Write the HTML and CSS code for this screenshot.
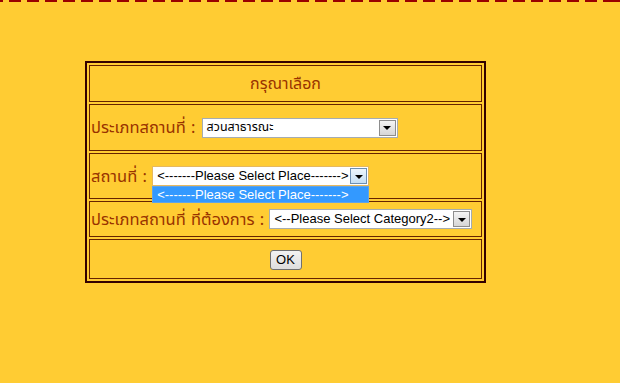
FILE: index.html
```html
<!DOCTYPE html>
<html>
<head>
<meta charset="utf-8">
<link rel="stylesheet" href="styles.css">
</head>
<body>
<div class="topline"></div>
<div class="wrap">
  <table class="box">
    <tr><td class="cell title r1">กรุณาเลือก</td></tr>
    <tr><td class="cell r2"><span class="lbl">ประเภทสถานที่ :</span> <span class="sel w1"><span class="val th">สวนสาธารณะ</span><span class="btn"><span class="tri"></span></span></span></td></tr>
    <tr><td class="cell r3"><span class="lbl">สถานที่ :</span> <span class="sel w2 focus"><span class="val">&lt;-------Please Select Place-------&gt;</span><span class="btn hot"><span class="tri"></span></span><span class="list">&lt;-------Please Select Place-------&gt;</span></span></td></tr>
    <tr><td class="cell r4"><span class="lbl">ประเภทสถานที่ ที่ต้องการ :</span> <span class="sel w3"><span class="val">&lt;--Please Select Category2--&gt;</span><span class="btn"><span class="tri"></span></span></span></td></tr>
    <tr><td class="cell center r5"><span class="ok">OK</span></td></tr>
  </table>
</div>
</body>
</html>
```

FILE: styles.css
```css
html, body {
  margin: 0;
  padding: 0;
  background: #ffcc33;
}
.topline {
  height: 2px;
  background: repeating-linear-gradient(90deg, #990000 0 12px, transparent 12px 18px);
  background-position: -9px 0;
}
.wrap {
  padding: 59px 0 0 85px;
}
.box {
  border: 2px solid #330000;
  border-spacing: 2px;
  width: 401px;
  box-sizing: border-box;
}
.cell {
  box-sizing: border-box;
  border: 1px solid #662200;
  padding: 0 0 0 1px;
  font-family: Tahoma, "Noto Sans Thai", Loma, Garuda, "DejaVu Sans", sans-serif;
  font-size: 16px;
  color: #993300;
  vertical-align: middle;
  white-space: nowrap;
}
.title, .center { text-align: center; padding: 0; }
.r1 { height: 37px; }
.r2 { height: 47px; }
.r3 { height: 46px; }
.r4 { height: 36px; }
.r5 { height: 40px; }
.lbl {
  vertical-align: middle;
  font-size: 16.5px;
  word-spacing: 1px;
}
.r2 .lbl { margin-right: 2px; }
.r3 .lbl { margin-right: 1px; }
.r4 .lbl { margin-right: 1px; }
.sel {
  position: relative;
  display: inline-flex;
  vertical-align: middle;
  box-sizing: border-box;
  height: 20px;
  border: 1px solid #a5acb2;
  background: #fff;
  font-family: "Liberation Sans", Arial, sans-serif;
  font-size: 13px;
  color: #000;
}
.w1 { width: 196px; }
.w2 { width: 217px; }
.w3 { width: 203px; }
.focus { border-color: #e5b860; }
.val {
  flex: 1;
  padding-left: 4px;
  line-height: 18px;
  overflow: hidden;
}
.val.th { font-family: Tahoma, "Noto Sans Thai", Loma, Garuda, "DejaVu Sans", sans-serif; font-size: 12.5px; }
.btn {
  box-sizing: border-box;
  width: 17px;
  height: 16px;
  margin: 1px;
  border: 1px solid #8d8d8d;
  background: linear-gradient(#f4f4f4, #d6d6d6);
  display: flex;
  align-items: center;
  justify-content: center;
}
.btn.hot {
  border-color: #6d8fb3;
  background: linear-gradient(#eef6fd, #c5dff5);
}
.tri {
  width: 0;
  height: 0;
  border-left: 4px solid transparent;
  border-right: 4px solid transparent;
  border-top: 4px solid #000;
  margin-top: 1px;
}
.list {
  position: absolute;
  left: -1px;
  top: 19px;
  width: 217px;
  height: 17px;
  box-sizing: border-box;
  background: #3399ff;
  border: 1px solid #5fa3e8;
  color: #fff;
  padding-left: 4px;
  line-height: 15px;
  z-index: 2;
}
.ok {
  display: inline-block;
  box-sizing: border-box;
  width: 32px;
  height: 20px;
  border: 1px solid #707070;
  border-radius: 3px;
  background: linear-gradient(#f2f2f2, #dddddd);
  font-family: "Liberation Sans", Arial, sans-serif;
  font-size: 13px;
  color: #000;
  line-height: 18px;
  text-align: center;
  vertical-align: middle;
}
```
